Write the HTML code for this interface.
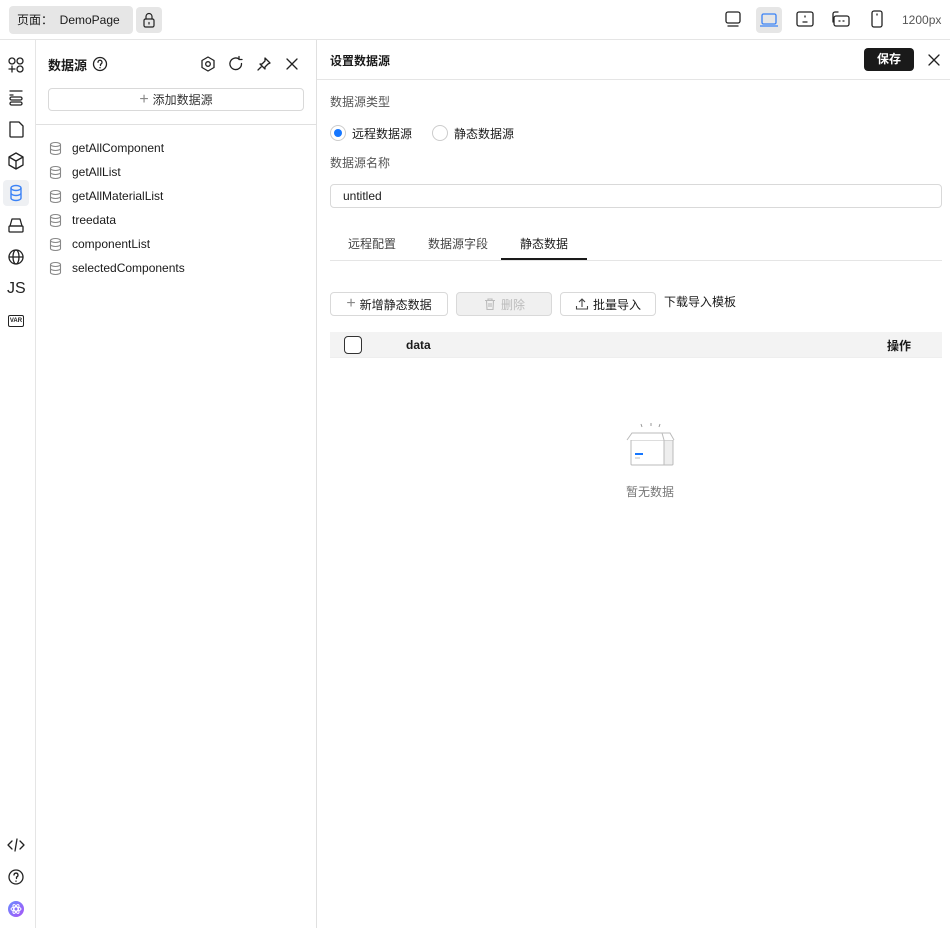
<!DOCTYPE html>
<html><head><meta charset="utf-8"><style>
*{box-sizing:border-box;margin:0;padding:0}
body{width:950px;height:928px;overflow:hidden;background:#fff;font-family:"Liberation Sans","Noto Sans CJK SC",sans-serif;font-size:12px;color:#1a1a1a;position:relative}
.a{position:absolute}
svg{display:block}
.ic{fill:none;stroke:#222;stroke-width:1.3;stroke-linecap:round;stroke-linejoin:round}
.btn{position:absolute;border:1px solid #d9d9d9;border-radius:4px;height:24px;display:flex;align-items:center;justify-content:center;gap:4px;font-size:12px;background:#fff}
</style></head><body>
<div class="a" style="left:0;top:39px;width:950px;height:1px;background:#e5e5e5"></div>
<div class="a" style="left:9px;top:6px;width:124px;height:28px;background:#e6e6e6;border-radius:4px;font-size:12px;line-height:28px;padding-left:8px">页面：&nbsp;&nbsp;DemoPage</div>
<div class="a" style="left:136px;top:7px;width:26px;height:26px;background:#e6e6e6;border-radius:4px"><svg width="26" height="26" class="ic" style="stroke-width:1.2"><rect x="8" y="12" width="10" height="8" rx="1.5"/><path d="M10 12V9.5a3 3 0 0 1 6 0V12"/><path d="M13 15.5v1.5"/></svg></div>
<svg class="a ic" style="left:722px;top:8px" width="22" height="22"><rect x="4" y="4" width="14" height="11" rx="2"/><path d="M6 18h10"/></svg>
<div class="a" style="left:756px;top:7px;width:26px;height:26px;background:#e6e6e6;border-radius:4px"><svg width="26" height="26" style="fill:none;stroke:#3b82f6;stroke-width:1.3"><rect x="6" y="7" width="14" height="10" rx="1.5"/><path d="M4 19h18"/></svg></div>
<svg class="a ic" style="left:794px;top:8px" width="22" height="22"><rect x="3" y="4" width="16" height="14" rx="2"/><path d="M11 8v1M9 14h4"/></svg>
<svg class="a ic" style="left:830px;top:8px" width="22" height="22"><rect x="4" y="8" width="15" height="10" rx="2"/><path d="M3 14V6a2 2 0 0 1 2-2h3M9 13h1M13 13h1"/></svg>
<svg class="a ic" style="left:866px;top:8px" width="22" height="22"><rect x="6" y="3" width="10" height="16" rx="2"/><path d="M11 6v1"/></svg>
<div class="a" style="left:902px;top:13px;color:#555">1200px</div>
<div class="a" style="left:35px;top:40px;width:1px;height:888px;background:#e5e5e5"></div>
<svg class="a ic" style="left:5px;top:54px" width="22" height="22"><circle cx="7" cy="7" r="3"/><circle cx="15" cy="7" r="3"/><circle cx="15" cy="15" r="3"/><path d="M7 12v6M4 15h6"/></svg>
<svg class="a ic" style="left:5px;top:86px" width="22" height="22"><path d="M5 5h12M5 9h3"/><rect x="5" y="11" width="12" height="3" rx="1.5"/><rect x="5" y="16" width="12" height="3" rx="1.5"/></svg>
<svg class="a ic" style="left:5px;top:118px" width="22" height="22"><path d="M5 4h9l4 4v10a1 1 0 0 1-1 1H6a1 1 0 0 1-1-1z"/></svg>
<svg class="a ic" style="left:5px;top:150px" width="22" height="22"><path d="M11 3l7 4v8l-7 4-7-4V7z M4 7l7 4 7-4 M11 11v8"/></svg>
<div class="a" style="left:3px;top:180px;width:26px;height:26px;background:#eef0f3;border-radius:4px"><svg width="26" height="26" style="fill:none;stroke:#3b82f6;stroke-width:1.4"><ellipse cx="13" cy="8" rx="5" ry="2.5"/><path d="M8 8v10c0 1.4 2.2 2.5 5 2.5s5-1.1 5-2.5V8M8 13c0 1.4 2.2 2.5 5 2.5s5-1.1 5-2.5"/></svg></div>
<svg class="a ic" style="left:5px;top:214px" width="22" height="22"><path d="M7 5h8l2 7H5z"/><rect x="4" y="12" width="14" height="6" rx="1"/></svg>
<svg class="a ic" style="left:5px;top:246px" width="22" height="22"><circle cx="11" cy="11" r="7"/><ellipse cx="11" cy="11" rx="3" ry="7"/><path d="M4 11h14"/></svg>
<div class="a" style="left:7px;top:280px;font-size:16px;color:#222">JS</div>
<div class="a" style="left:8px;top:315px;width:16px;height:12px;border:1.2px solid #222;border-radius:2px;font-size:6px;line-height:10px;text-align:center;font-weight:bold">VAR</div>
<svg class="a ic" style="left:5px;top:834px" width="22" height="22"><path d="M7 7l-4 4 4 4M15 7l4 4-4 4M12 5l-2 12"/></svg>
<svg class="a ic" style="left:5px;top:866px" width="22" height="22"><circle cx="11" cy="11" r="7"/><path d="M9 9a2 2 0 1 1 2.5 2v1.5M11 15v.3"/></svg>
<div class="a" style="left:8px;top:901px;width:16px;height:16px;border-radius:50%;background:linear-gradient(135deg,#6b8cff,#a855f7)"><svg width="16" height="16" style="fill:none;stroke:#fff;stroke-width:1"><ellipse cx="8" cy="8" rx="5" ry="2"/><ellipse cx="8" cy="8" rx="5" ry="2" transform="rotate(60 8 8)"/><ellipse cx="8" cy="8" rx="5" ry="2" transform="rotate(-60 8 8)"/></svg></div>
<div class="a" style="left:316px;top:40px;width:1px;height:888px;background:#e0e0e0"></div>
<div class="a" style="left:48px;top:55px;font-weight:bold;font-size:13px">数据源</div>
<svg class="a ic" style="left:91px;top:55px" width="18" height="18"><circle cx="9" cy="9" r="6.5"/><path d="M7 7.3a2 2 0 1 1 2.5 1.9V10.5M9 12.5v.3"/></svg>
<svg class="a ic" style="left:198px;top:54px" width="20" height="20"><path d="M10 3l6 3.5v7L10 17l-6-3.5v-7z"/><circle cx="10" cy="10" r="2.3"/></svg>
<svg class="a ic" style="left:226px;top:54px" width="20" height="20"><path d="M15.5 9.5A5.8 5.8 0 1 1 13 5M13 2.5V5.5h3"/></svg>
<svg class="a ic" style="left:254px;top:54px" width="20" height="20"><path d="M11 4l5 5-2 1-3 3 0 2-5-5 2 0 3-3z M8 12l-4 4"/></svg>
<svg class="a ic" style="left:282px;top:54px" width="20" height="20"><path d="M5 5l10 10M15 5L5 15"/></svg>
<div class="btn" style="left:48px;top:88px;width:256px;height:23px;color:#333"><span style="font-size:16px;color:#888;line-height:1">+</span>添加数据源</div>
<div class="a" style="left:36px;top:124px;width:280px;height:1px;background:#e0e0e0"></div>
<div class="a" style="left:48px;top:136px;line-height:24px;font-size:12px">
<div style="display:flex;align-items:center;gap:9px"><svg width="15" height="15" style="fill:none;stroke:#888;stroke-width:1.1"><ellipse cx="7.5" cy="3.5" rx="5" ry="2"/><path d="M2.5 3.5v8c0 1.1 2.2 2 5 2s5-.9 5-2v-8M2.5 7.5c0 1.1 2.2 2 5 2s5-.9 5-2"/></svg>getAllComponent</div>
<div style="display:flex;align-items:center;gap:9px"><svg width="15" height="15" style="fill:none;stroke:#888;stroke-width:1.1"><ellipse cx="7.5" cy="3.5" rx="5" ry="2"/><path d="M2.5 3.5v8c0 1.1 2.2 2 5 2s5-.9 5-2v-8M2.5 7.5c0 1.1 2.2 2 5 2s5-.9 5-2"/></svg>getAllList</div>
<div style="display:flex;align-items:center;gap:9px"><svg width="15" height="15" style="fill:none;stroke:#888;stroke-width:1.1"><ellipse cx="7.5" cy="3.5" rx="5" ry="2"/><path d="M2.5 3.5v8c0 1.1 2.2 2 5 2s5-.9 5-2v-8M2.5 7.5c0 1.1 2.2 2 5 2s5-.9 5-2"/></svg>getAllMaterialList</div>
<div style="display:flex;align-items:center;gap:9px"><svg width="15" height="15" style="fill:none;stroke:#888;stroke-width:1.1"><ellipse cx="7.5" cy="3.5" rx="5" ry="2"/><path d="M2.5 3.5v8c0 1.1 2.2 2 5 2s5-.9 5-2v-8M2.5 7.5c0 1.1 2.2 2 5 2s5-.9 5-2"/></svg>treedata</div>
<div style="display:flex;align-items:center;gap:9px"><svg width="15" height="15" style="fill:none;stroke:#888;stroke-width:1.1"><ellipse cx="7.5" cy="3.5" rx="5" ry="2"/><path d="M2.5 3.5v8c0 1.1 2.2 2 5 2s5-.9 5-2v-8M2.5 7.5c0 1.1 2.2 2 5 2s5-.9 5-2"/></svg>componentList</div>
<div style="display:flex;align-items:center;gap:9px"><svg width="15" height="15" style="fill:none;stroke:#888;stroke-width:1.1"><ellipse cx="7.5" cy="3.5" rx="5" ry="2"/><path d="M2.5 3.5v8c0 1.1 2.2 2 5 2s5-.9 5-2v-8M2.5 7.5c0 1.1 2.2 2 5 2s5-.9 5-2"/></svg>selectedComponents</div>
</div>
<div class="a" style="left:330px;top:52px;font-weight:bold">设置数据源</div>
<div class="a" style="left:864px;top:48px;width:50px;height:23px;background:#1a1a1a;color:#fff;border-radius:4px;text-align:center;line-height:23px;font-weight:bold">保存</div>
<svg class="a ic" style="left:924px;top:50px" width="20" height="20"><path d="M5 5l10 10M15 5L5 15"/></svg>
<div class="a" style="left:317px;top:79px;width:633px;height:1px;background:#e5e5e5"></div>
<div class="a" style="left:330px;top:93px;color:#555">数据源类型</div>
<div class="a" style="left:330px;top:125px;width:16px;height:16px;border:1px solid #ccc;border-radius:50%"><div style="margin:3px;width:8px;height:8px;border-radius:50%;background:#1677ff"></div></div>
<div class="a" style="left:352px;top:125px">远程数据源</div>
<div class="a" style="left:432px;top:125px;width:16px;height:16px;border:1px solid #ccc;border-radius:50%"></div>
<div class="a" style="left:454px;top:125px">静态数据源</div>
<div class="a" style="left:330px;top:154px;color:#555">数据源名称</div>
<div class="a" style="left:330px;top:184px;width:612px;height:24px;border:1px solid #d9d9d9;border-radius:4px;padding-left:12px;line-height:22px">untitled</div>
<div class="a" style="left:348px;top:235px;color:#444">远程配置</div>
<div class="a" style="left:428px;top:235px;color:#444">数据源字段</div>
<div class="a" style="left:520px;top:235px">静态数据</div>
<div class="a" style="left:330px;top:260px;width:612px;height:1px;background:#e5e5e5"></div>
<div class="a" style="left:501px;top:258px;width:86px;height:2px;background:#1a1a1a"></div>
<div class="btn" style="left:330px;top:292px;width:118px"><span style="font-size:16px;color:#888;line-height:1">+</span>新增静态数据</div>
<div class="btn" style="left:456px;top:292px;width:96px;background:#f0f0f0;color:#bbb"><svg width="14" height="14" style="fill:none;stroke:#bbb;stroke-width:1.1"><path d="M2 3.5h10M5 3.5V2h4v1.5M3.5 3.5l.5 9h6l.5-9M6 6v4M8 6v4"/></svg>删除</div>
<div class="btn" style="left:560px;top:292px;width:96px"><svg width="14" height="14" style="fill:none;stroke:#444;stroke-width:1.1"><path d="M7 10V2M4 5l3-3 3 3M1.5 9v3h11V9"/></svg>批量导入</div>
<div class="a" style="left:664px;top:293px">下载导入模板</div>
<div class="a" style="left:330px;top:332px;width:612px;height:26px;background:#f3f3f3;border-bottom:1px solid #eee"></div>
<div class="a" style="left:344px;top:336px;width:18px;height:18px;border:1.2px solid #333;border-radius:4px;background:#fff"></div>
<div class="a" style="left:406px;top:338px;font-weight:bold">data</div>
<div class="a" style="left:887px;top:337px;font-weight:bold">操作</div>
<svg class="a" style="left:624px;top:420px" width="54" height="48"><path d="M17 4l1 3M27 3v3M36 4l-1 3" stroke="#999" stroke-width="1" fill="none"/><path d="M7 20h33v25H8a1 1 0 0 1-1-1z" fill="#fff" stroke="#bbb" stroke-width="1"/><path d="M40 20l9 0v24a1 1 0 0 1-1 1h-8z" fill="#eee" stroke="#bbb"/><path d="M3 20l5-7h30l2 7M40 20l-2-7h8l4 7" fill="#fff" stroke="#bbb"/><path d="M11 34h8" stroke="#1677ff" stroke-width="2"/><path d="M11 38h5" stroke="#bbb"/></svg>
<div class="a" style="left:626px;top:483px;color:#777">暂无数据</div>
</body></html>
